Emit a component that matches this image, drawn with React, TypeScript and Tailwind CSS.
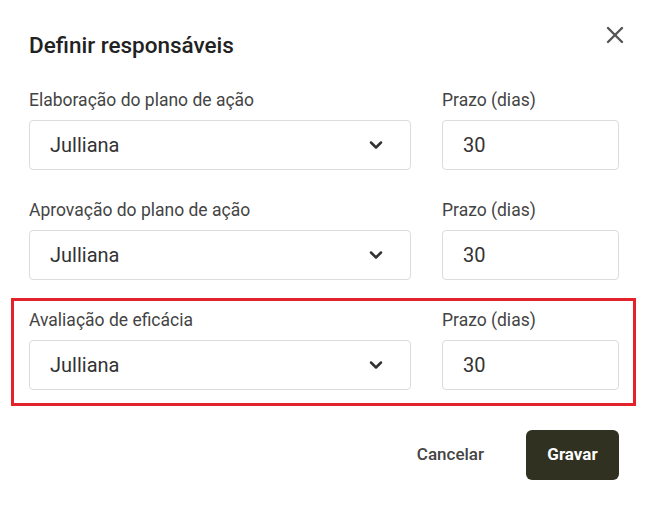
import { ChevronDown, X } from "lucide-react";

const rows = [
    { label: "Elaboração do plano de ação", value: "Julliana", days: "30" },
    { label: "Aprovação do plano de ação", value: "Julliana", days: "30" },
    { label: "Avaliação de eficácia", value: "Julliana", days: "30" },
];

function Row({ label, value, days }: { label: string; value: string; days: string }) {
    return (
        <div className="flex gap-[31px]">
            <div className="flex w-[382px] shrink-0 flex-col gap-[10px]">
                <span className="h-[20px] text-[17.5px] leading-[20px] text-[#444]">{label}</span>
                <div className="flex h-[50px] items-center justify-between rounded-[4px] border border-[#dcdcdc] pl-[20px] pr-[24px]">
                    <span className="text-[20px] text-[#333]">{value}</span>
                    <ChevronDown size={20} strokeWidth={3} className="text-[#333]" />
                </div>
            </div>
            <div className="flex w-[177px] shrink-0 flex-col gap-[10px]">
                <span className="h-[20px] text-[17.5px] leading-[20px] text-[#444]">Prazo (dias)</span>
                <div className="flex h-[50px] items-center rounded-[4px] border border-[#dcdcdc] pl-[20px]">
                    <span className="text-[20px] text-[#333]">{days}</span>
                </div>
            </div>
        </div>
    );
}

export default function App() {
    return (
        <div className="h-[507px] w-[645px] bg-white font-['Roboto',sans-serif]">
            {/* Header */}
            <div className="flex items-start justify-between pl-[29px] pr-[16px] pt-[31px]">
                <h1 className="text-[22.5px] font-medium leading-[28px] text-[#222]">Definir responsáveis</h1>
                <X size={28} strokeWidth={2.1} className="mt-[-10px] text-[#555]" />
            </div>

            <div className="mt-[31px] flex flex-col gap-[30px] pl-[29px]">
                <Row {...rows[0]} />
                <Row {...rows[1]} />
            </div>

            {/* Highlighted row */}
            <div className="ml-[11px] mr-[9px] mt-[18px] border-[3px] border-[#e3232b] pb-[13px] pl-[15px] pr-[14px] pt-[9px]">
                <Row {...rows[2]} />
            </div>

            {/* Footer */}
            <div className="mt-[24px] flex justify-end gap-[26px] pr-[26px]">
                <button className="h-[50px] px-[16px] text-[17px] font-medium text-[#444]">Cancelar</button>
                <button className="h-[50px] w-[93px] rounded-[6px] bg-[#303121] text-[17px] font-bold text-white">
                    Gravar
                </button>
            </div>
        </div>
    );
}
